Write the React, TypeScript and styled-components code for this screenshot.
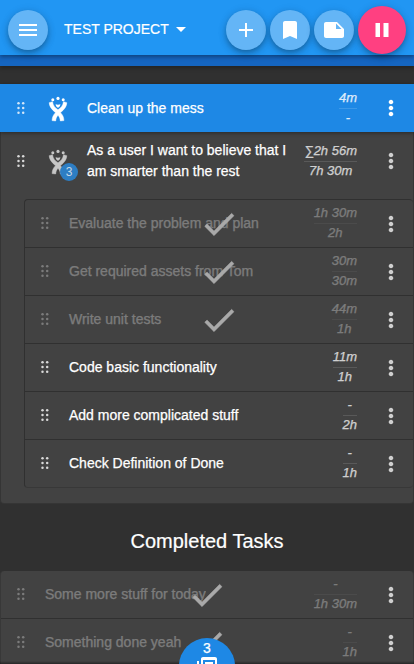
import React from 'react';
import styled, { createGlobalStyle } from 'styled-components';

const GlobalStyle = createGlobalStyle`
  *, *::before, *::after { box-sizing: border-box; }
  html, body { margin: 0; height: 100%; overflow: hidden; }
  body { background: #303030; color: #fff; font: 14px/20px "Liberation Sans", Arial, sans-serif; }
  button { border: 0; padding: 0; color: inherit; font: inherit; }
  svg { display: block; flex: none; overflow: visible; }
`;

const Page = styled.div`
  position: relative;
  height: 664px;
  overflow: hidden;
`;

const Header = styled.header`
  position: relative;
  z-index: 2;
  display: flex;
  align-items: center;
  height: 55px;
  padding: 4px 8px 0;
  background: #2196f3;
  box-shadow: 0 2px 4px rgba(0, 0, 0, 0.35);
`;

const RoundButton = styled.button<{ $primary?: boolean }>`
  display: flex;
  flex: none;
  align-items: center;
  justify-content: center;
  width: ${(p) => (p.$primary ? 48 : 40)}px;
  height: ${(p) => (p.$primary ? 48 : 40)}px;
  border-radius: 50%;
  background: ${(p) => (p.$primary ? '#ff4081' : '#64b5f6')};
  box-shadow: 0 3px 5px -1px rgba(0, 0, 0, 0.2), 0 4px 8px rgba(0, 0, 0, 0.14), 0 1px 10px rgba(0, 0, 0, 0.1);
`;

const ProjectButton = styled.button`
  display: flex;
  align-items: center;
  margin: -2px auto 0 16px;
  background: none;
  font-size: 14px;
  -webkit-text-stroke: 0.2px;
`;

const Actions = styled.div`
  display: flex;
  align-items: center;
  gap: 4px;
`;

const Progress = styled.div`
  position: relative;
  z-index: 1;
  height: 11px;
  background: #1565c0;
  box-shadow: 0 2px 4px rgba(0, 0, 0, 0.3);
`;

const TaskList = styled.main`
  padding-top: 18px;
`;

const Row = styled.div<{ $current?: boolean; $tall?: boolean }>`
  position: relative;
  z-index: ${(p) => (p.$current ? 1 : 0)};
  display: flex;
  align-items: center;
  height: ${(p) => (p.$tall ? 58 : 48)}px;
  padding: 0 10px 0 ${(p) => (p.$current ? 15 : 14)}px;
  ${(p) => p.$current && 'padding-right: 11px; background: #1e88e5; box-shadow: 0 1px 4px rgba(0, 0, 0, 0.4);'}
`;

const Parent = styled.section`
  height: 372px;
  padding-bottom: 15px;
  border: 1px solid #353535;
  border-top: 0;
  border-radius: 0 0 4px 4px;
  background: #424242;
`;

const SubTasks = styled.div`
  margin: 9px 0 0 23px;
  border: 1px solid #303030;
  border-right: 0;
  border-bottom-color: #383838;
  border-radius: 4px;
  ${Row} { height: 48px; border-bottom: 1px solid #303030; }
  ${Row}:last-child { height: 47px; border-bottom: 0; }
`;

const DragHandle = styled.span<{ $faded?: boolean }>`
  flex: none;
  opacity: ${(p) => (p.$faded ? 0.3 : 0.8)};
`;

const MoreButton = styled.button<{ $bright?: boolean }>`
  flex: none;
  background: none;
  opacity: ${(p) => (p.$bright ? 1 : 0.75)};
`;

const IssueIcon = styled.span<{ $dim?: boolean }>`
  position: relative;
  flex: none;
  margin-left: 18px;
  color: ${(p) => (p.$dim ? '#c6c6c6' : '#fff')};
`;

const Count = styled.span`
  position: absolute;
  left: 15px;
  top: 15px;
  width: 18px;
  height: 18px;
  border-radius: 50%;
  background: #2d7ec4;
  color: #c6d8e7;
  font-size: 12px;
  line-height: 18px;
  text-align: center;
`;

const Title = styled.span<{ $faded?: boolean; $indent: number }>`
  flex: 1;
  margin-left: ${(p) => p.$indent}px;
  line-height: 21px;
  white-space: pre-line;
  -webkit-text-stroke: 0.25px;
  opacity: ${(p) => (p.$faded ? 0.3 : 1)};
`;

const Time = styled.span<{ $faded?: boolean; $bright?: boolean }>`
  flex: none;
  margin-right: 22px;
  font-size: 13px;
  font-style: italic;
  line-height: 17px;
  text-align: center;
  -webkit-text-stroke: 0.25px;
  opacity: ${(p) => (p.$faded ? 0.3 : p.$bright ? 0.85 : 0.75)};
`;

const Spent = styled.span`
  display: block;
  padding-bottom: 2px;
  border-bottom: 1px solid rgba(255, 255, 255, 0.17);
`;

const Estimate = styled.span`
  display: block;
  padding-bottom: 2px;
`;

const Check = styled.span`
  position: absolute;
  top: 4px;
  left: 50%;
  margin-left: -20px;
  color: #a9a9a9;
  path { stroke: currentColor; stroke-width: 0.25; }
`;

const Heading = styled.h2`
  margin: 0;
  height: 67px;
  padding-top: 23px;
  font-size: 20px;
  font-weight: 400;
  line-height: 28px;
  text-align: center;
  -webkit-text-stroke: 0.2px;
`;

const Completed = styled.section`
  border: 1px solid #383838;
  border-top: 0;
  border-radius: 4px;
  background: #424242;
  ${Row} { border-bottom: 1px solid #303030; }
`;

const BottomShade = styled.div`
  position: absolute;
  z-index: 2;
  bottom: 0;
  left: 0;
  right: 0;
  height: 3px;
  background: linear-gradient(transparent, rgba(0, 0, 0, 0.4));
`;

const NotesTab = styled.button`
  position: absolute;
  z-index: 3;
  left: 179px;
  top: 638px;
  display: flex;
  flex-direction: column;
  align-items: center;
  width: 56px;
  height: 56px;
  border-radius: 50%;
  background: #1e88e5;
  line-height: 20px;
  -webkit-text-stroke: 0.25px;
  svg { margin-top: -3px; }
`;

function Icon({ d, size = 24 }: { d: string; size?: number }) {
  return <svg width={size} height={size} viewBox="0 0 24 24" fill="currentColor"><path d={d} /></svg>;
}

const paths = {
  menu: 'M3 18h18v-2H3v2zm0-5h18v-2H3v2zm0-7v2h18V6H3z',
  arrow: 'M7 10l5 5 5-5z',
  add: 'M19 13h-6v6h-2v-6H5v-2h6V5h2v6h6v2z',
  bookmark: 'M17 3H7c-1.1 0-2 .9-2 2v16l7-3 7 3V5c0-1.1-.9-2-2-2z',
  note: 'M15 4H4c-1.1 0-2 .9-2 2v12.010c0 1.1.9 1.990 2 1.990h16c1.1 0 2-.9 2-2V11l-7-7zm-1 7V5.500l5.500 5.500H14z',
  pause: 'M5.500 19h4.500V5H5.500v14zm8-14v14h5V5h-5z',
  more: 'M12 8.300c1.270 0 2.300-1.030 2.300-2.300s-1.030-2.300-2.300-2.300-2.300 1.030-2.300 2.300 1.030 2.300 2.300 2.300zm0 1.400c-1.270 0-2.300 1.030-2.300 2.300s1.030 2.300 2.300 2.300 2.300-1.030 2.300-2.300-1.030-2.300-2.300-2.300zm0 6c-1.270 0-2.300 1.030-2.300 2.300s1.030 2.300 2.300 2.300 2.300-1.030 2.300-2.300-1.030-2.300-2.300-2.300z',
  check: 'M9 16.170L4.830 12l-1.420 1.410L9 19 21 7l-1.410-1.410z',
  notes: 'M4 6H2v14c0 1.1.9 2 2 2h14v-2H4V6zm16-4H8c-1.100 0-2 .9-2 2v12c0 1.100.9 2 2 2h12c1.100 0 2-.9 2-2V4c0-1.100-.9-2-2-2zm0 13H8V5h12v10zM10 7h8v2h-8z',
};

function Dots() {
  return (
    <svg width="12" height="17" fill="currentColor">
      {[3.3, 8, 12.7].map((y) => [3.5, 8.2].map((x) => <circle key={`${x}-${y}`} cx={x} cy={y} r="1.250" />))}
    </svg>
  );
}

function JiraMark() {
  return (
    <svg width="26" height="26" viewBox="0 0 26 26" fill="currentColor">
      <circle cx="7.800" cy="4.700" r="1.500" />
      <circle cx="13" cy="3.400" r="1.600" />
      <circle cx="18.200" cy="4.700" r="1.500" />
      <path d="M10.600 9.200c1.600.6 3.200.6 4.800 0-.2 1.700-1.100 2.900-2.400 3.500-1.300-.6-2.200-1.800-2.400-3.500z" />
      <path stroke="currentColor" strokeWidth="0.500" strokeLinejoin="round" d="M4.200 7.700 7.500 6.700C8 10.600 9.900 12.600 13 14.800c3.100-2.200 5-4.200 5.500-8.100l3.300 1c-.2 4.200-2.700 6.700-6.300 10 2.200 2.200 3.300 4.500 3.400 7.900l-3.600.3c-.2-2.600-.9-4.100-2.300-5.600-1.400 1.500-2.100 3-2.300 5.600L7.100 25.600c.1-3.400 1.200-5.700 3.400-7.900C6.900 14.400 4.400 11.900 4.200 7.700z" />
    </svg>
  );
}

interface TaskProps {
  title: string;
  spent: string;
  estimate: string;
  done?: boolean;
  current?: boolean;
  jira?: boolean;
  count?: number;
}

function Task({ title, spent, estimate, done, current, jira, count }: TaskProps) {
  return (
    <Row $current={current} $tall={count !== undefined}>
      <DragHandle $faded={done}><Dots /></DragHandle>
      {jira && (
        <IssueIcon $dim={!current}>
          <JiraMark />
          {count !== undefined && <Count>{count}</Count>}
        </IssueIcon>
      )}
      <Title $faded={done} $indent={jira ? 16 : 18}>{title}</Title>
      <Time $faded={done} $bright={current}>
        <Spent>{spent}</Spent>
        <Estimate>{estimate}</Estimate>
      </Time>
      <MoreButton $bright={current}><Icon d={paths.more} /></MoreButton>
      {done && <Check><Icon d={paths.check} size={40} /></Check>}
    </Row>
  );
}

const subTasks: TaskProps[] = [
  { title: 'Evaluate the problem and plan', spent: '1h 30m', estimate: '2h', done: true },
  { title: 'Get required assets from Tom', spent: '30m', estimate: '30m', done: true },
  { title: 'Write unit tests', spent: '44m', estimate: '1h', done: true },
  { title: 'Code basic functionality', spent: '11m', estimate: '1h' },
  { title: 'Add more complicated stuff', spent: '-', estimate: '2h' },
  { title: 'Check Definition of Done', spent: '-', estimate: '1h' },
];

export default function App() {
  return (
    <Page>
      <GlobalStyle />
      <Header>
        <RoundButton><Icon d={paths.menu} /></RoundButton>
        <ProjectButton>TEST PROJECT<Icon d={paths.arrow} /></ProjectButton>
        <Actions>
          <RoundButton><Icon d={paths.add} /></RoundButton>
          <RoundButton><Icon d={paths.bookmark} /></RoundButton>
          <RoundButton><Icon d={paths.note} /></RoundButton>
          <RoundButton $primary><Icon d={paths.pause} /></RoundButton>
        </Actions>
      </Header>
      <Progress />
      <TaskList>
        <Task title="Clean up the mess" spent="4m" estimate="-" current jira />
        <Parent>
          <Task
            title={'As a user I want to believe that I\nam smarter than the rest'}
            spent="∑2h 56m"
            estimate="7h 30m"
            jira
            count={3}
          />
          <SubTasks>{subTasks.map((t) => <Task key={t.title} {...t} />)}</SubTasks>
        </Parent>
        <Heading>Completed Tasks</Heading>
        <Completed>
          <Task title="Some more stuff for today" spent="-" estimate="1h 30m" done />
          <Task title="Something done yeah" spent="-" estimate="1h" done />
        </Completed>
      </TaskList>
      <BottomShade />
      <NotesTab>3<Icon d={paths.notes} /></NotesTab>
    </Page>
  );
}
